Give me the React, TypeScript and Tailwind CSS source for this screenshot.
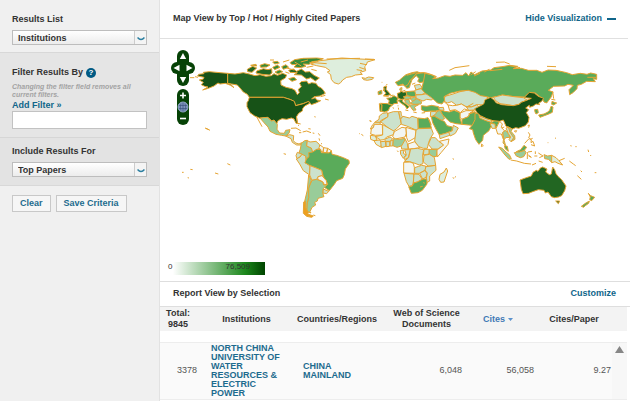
import { ReactNode, useState } from 'react';

type Shape = {
  fill: string;
  d: string;
};

type Region = {
  name: string;
  transform: string;
  shapes: Shape[];
  islands?: string;
};

const C = {
  none: '#f3f6f2',
  faint: '#deeedd',
  low: '#cce2cc',
  mid: '#99cc99',
  high: '#5aab5a',
  higher: '#378a37',
  top: '#226622',
  max: '#175217',
};

// Every region is traced in its own local frame and moved into place
const regions: Region[] = [
  {
    name: 'North America',
    transform: 'translate(0 3)',
    shapes: [
      { fill: C.max, d: 'M116 103L132 101L130 97L148 95L180 98L203 100V130L212 133L222 143L212 136L196 130L180 132L174 129L162 138L145 145L128 150L144 141L134 139L124 134L130 127L118 120L130 117L132 112L113 108Z' },
      { fill: C.top, d: 'M203 100L225 102L250 98L268 102L285 107L300 104L318 109L334 107L342 101L352 106L368 100L380 105L376 114L362 122L363 135L378 142L396 146L405 151L412 164L418 158L415 148L424 140L419 130L424 125L440 123L446 132L455 128L468 130L474 139L484 144L491 152L496 160L480 168L462 170L455 177L466 173L470 180L482 182L468 189L454 194L447 185L428 191L407 197L402 185L392 179L370 172H268L262 163L250 156L240 144L232 135L215 132L203 130Z' },
      { fill: C.max, d: 'M268 172H370L392 179L403 184L407 197L430 191L446 184L449 190L434 198L428 206L427 213L416 220L409 231L413 250L408 250L402 237L394 234L380 238L366 236L354 242L350 252L342 240L335 243L324 232L300 235L284 228L270 218L261 200L261 188L265 182Z' },
      { fill: C.top, d: 'M262 88L278 79L290 84L276 97L263 95Z M290 93L310 86L324 89L335 86L336 99L328 105L306 103L288 99Z M386 91L400 87L410 94L424 87L436 96L449 95L462 106L478 114L466 123L452 113L440 117L424 105L402 104L412 98L390 97Z' },
      { fill: C.higher, d: 'M390 68L404 59L430 55L470 54L490 56L472 63L455 65L448 73L430 72L438 79L420 83L402 81L410 73L396 74Z M300 76L314 71L330 75L320 81L302 82Z M338 82L352 75L360 82L344 89Z M365 80L378 74L386 82L370 88Z M345 96L358 90L368 95L354 102Z M338 66L352 64L358 69L344 72Z M272 76L288 73L290 78Z M386 116L402 112L410 119L396 124Z' },
      { fill: C.faint, d: 'M452 72L470 65L480 62L498 60L510 58L545 54L580 56L620 58L645 59L622 66L619 75L614 80L617 92L600 97L607 103L586 105L574 110L560 112L548 120L542 128L535 132L522 128L514 118L512 104L502 96L510 92L496 82L470 77Z' },
    ],
    islands: 'M90 113H103M105 110L114 112M136 265L146 269M463 230L467 231M495 177L506 180M482 170L496 166M330 60H342M369 66L388 60M422 66L444 60M440 82L460 78M454 88L470 92M290 230L306 260M410 232L412 248M448 67L500 71M600 70L618 74M598 82L616 88M590 89L606 92M500 57L600 55M615 57L642 58M380 84L402 90M376 96L388 100M404 66L424 78',
  },
  {
    name: 'South America',
    transform: 'translate(0 243)',
    shapes: [
      { fill: C.mid, d: 'M300 -6L322 -8L334 3L342 1L352 13L351 28L359 39L373 40L377 31L390 29L387 40L377 48L365 46L348 43L330 34L324 21L312 8Z' },
      { fill: C.low, d: 'M377 48L389 44L401 47L400 62L407 69L417 72L425 68L422 75L410 75L397 67L393 56Z' },
      { fill: C.mid, d: 'M424 70L434 62L442 61L440 78L454 84L458 95L455 105L447 110L440 116L430 105L417 98L421 87Z' },
      { fill: C.low, d: 'M442 62L450 66L468 64L478 73L480 84L470 89L458 96L454 84L440 78Z' },
      { fill: C.none, d: 'M480 75L491 83L489 97L480 91L477 83Z M491 83L503 85L500 98L489 97Z M503 85L514 92L508 99L500 98Z' },
      { fill: C.low, d: 'M412 97L426 103L420 111L411 116L408 107Z' },
      { fill: C.low, d: 'M426 103L437 108L438 121L435 128L450 137L449 152L449 165L430 152L419 132L409 117L420 111Z' },
      { fill: C.high, d: 'M447 110L446 98L458 96L470 88L482 88L484 98L508 99L514 92L516 103L530 106L550 113L567 121L568 130L556 147L553 164L548 175L530 182L523 193L508 212L493 202L503 193L498 182L490 170L485 151L466 143L450 137L435 128L440 116Z' },
      { fill: C.low, d: 'M450 137L466 143L485 151L488 167L474 170L470 179L456 181L449 165Z' },
      { fill: C.none, d: 'M474 170L486 167L499 182L501 192L494 195L488 185L473 178Z' },
      { fill: C.mid, d: 'M456 181L470 178L488 186L491 195L502 193L490 206L489 222L492 230L474 235L472 243L464 247L467 255L456 262L450 275L453 279L440 274L441 252L446 232L445 205Z' },
      { fill: C.low, d: 'M490 207L506 214L500 221L489 219Z' },
      { fill: C.mid, d: 'M446 165L454 181L446 205L446 232L441 252L440 276L434 270L434 244L442 210Z' },
      { fill: '#eda01f', d: 'M431 246L437 244L436 262L445 277L443 282L460 288L455 292L440 289L430 280Z' },
    ],
    islands: 'M136 24L143 27L150 31M202 131L211 135M91 148L98 149M66 157H71M83 173L87 174M165 159L175 162M371 101L378 103M393 25L408 24L422 32M428 36L440 33L453 38M414 15L417 17M410 9L422 12M475 40L480 47M477 55L479 62M483 70L486 72M417 38H424M458 39L463 40M445 26L452 27M598 41H600M460 285L466 287',
  },
  {
    name: 'Europe',
    transform: 'translate(510 18)',
    shapes: [
      { fill: C.high, d: 'M196 112L208 106L218 97L228 89L246 83L262 80L270 84L258 87L250 97L240 107L238 119L231 127L224 124L219 117L204 122Z' },
      { fill: C.high, d: 'M270 84L281 83L289 88L288 100L290 108L270 113L263 109L267 101L259 92L246 104L241 118L238 128L230 130L226 123L234 119L240 107L250 97L258 87Z' },
      { fill: C.low, d: 'M96 98L106 100L116 96L131 98L127 103L112 106L101 104Z' },
      { fill: C.top, d: 'M161 126L170 123L168 133L176 142L182 149L170 152L161 151L168 145L163 139Z' },
      { fill: C.high, d: 'M144 140L155 136L156 146L145 149Z' },
      { fill: C.higher, d: 'M170 160L183 158L192 152L204 159L201 167L203 175L191 176L188 180L175 176L178 167Z' },
      { fill: C.higher, d: 'M148 176L156 178L155 199L150 199Z' },
      { fill: C.higher, d: 'M152 175L172 176L187 181L179 187L175 197L163 201L155 199L156 179Z' },
      { fill: C.top, d: 'M202 145L210 143L212 138L220 142L228 140L231 152L221 155L226 162L213 163L204 159Z' },
      { fill: C.mid, d: 'M209 135L211 129L216 128L215 136Z' },
      { fill: C.high, d: 'M228 140L252 138L258 143L256 154L246 155L231 152Z' },
      { fill: C.higher, d: 'M203 166L218 163L218 170L229 178L238 185L231 192L226 183L214 175Z' },
      { fill: C.mid, d: 'M221 155L232 153L244 156L240 162L226 163Z M224 165L236 163L241 175L236 180L226 172Z M240 161L256 155L260 165L249 170Z' },
      { fill: C.mid, d: 'M249 168L260 161L275 170L273 177L252 178L241 174Z' },
      { fill: C.mid, d: 'M238 180L252 179L266 179L253 186L258 195L249 196Z' },
      { fill: C.low, d: 'M253 121L270 118L277 129L258 135Z' },
      { fill: C.low, d: 'M254 136L276 130L285 144L275 149L257 149Z' },
      { fill: C.low, d: 'M257 150L276 149L291 146L312 157L305 165L290 163L279 168L259 160Z' },
      { fill: C.high, d: 'M274 182L290 184L305 181L326 185L330 195L317 198L303 198L285 200L274 194Z' },
    ],
    islands: 'M155 112L157 112M168 121L172 117M246 118L256 114M205 188L206 194M204 181V184M226 195L235 197M250 201L260 203M275 204L285 203M230 91L255 84L286 83L305 89L320 95M204 122L222 120M163 130L160 138M120 228L124 229M188 188L192 190M216 139L226 136M180 153L190 150M160 153L176 154',
  },
  {
    name: 'Africa and Middle East',
    transform: 'translate(600 138)',
    shapes: [
      { fill: C.low, d: 'M251 48L255 34L276 28L300 20L325 15L348 21L362 30L382 35L383 46L372 60L350 59L334 66L318 65L304 57L290 61L275 50L262 54Z' },
      { fill: C.none, d: 'M264 60L278 62L290 61L304 57L318 65L334 66L326 76L313 72L301 83L286 74L269 77Z' },
      { fill: C.low, d: 'M320 66L334 66L350 60L358 67L342 75L326 76Z' },
      { fill: C.none, d: 'M300 84L318 77L334 77L343 76L330 84L325 95L306 103L299 96Z' },
      { fill: C.high, d: 'M241 75L254 79L268 81L282 76L300 83L300 100L306 118L288 116L270 111L256 98L247 89Z' },
      { fill: C.mid, d: 'M238 76L247 88L254 101L244 106L221 92L229 82Z' },
      { fill: C.low, d: 'M212 80L229 79L228 86L219 93L211 95Z M235 68L250 67L252 76L240 75Z' },
      { fill: C.high, d: 'M214 96L222 93L244 106L253 109L261 122L277 126L276 138L257 145L238 150L228 133L218 113Z' },
      { fill: C.low, d: 'M238 150L257 145L267 141L272 150L240 161Z' },
      { fill: C.low, d: 'M280 121L295 129L286 145L271 153L266 142L277 137Z' },
      { fill: C.high, d: 'M306 103L325 95L331 84L345 80L353 91L345 107L338 121L325 120L306 118Z' },
      { fill: C.low, d: 'M68 85L82 83L84 95L62 107L61 112L44 112L57 103L58 93Z' },
      { fill: C.faint, d: 'M45 112L61 112L60 118L43 118L40 128L31 132L38 119Z' },
      { fill: C.none, d: 'M43 118L60 118L67 119L68 150L46 151L32 147L34 132L40 128Z' },
      { fill: C.low, d: 'M84 85L100 80L116 80L119 97L124 116L110 131L99 139L84 128L62 110L84 95Z' },
      { fill: C.low, d: 'M116 80L123 80L124 92L129 95L121 101Z' },
      { fill: C.low, d: 'M129 94L148 99L156 94L173 99L175 137L168 135L140 123L124 118L122 102Z' },
      { fill: C.high, d: 'M174 99L193 101L204 98L209 107L214 129L175 130Z' },
      { fill: C.faint, d: 'M68 119L84 128L103 139L100 149L80 156L72 164L62 165L46 155L68 150Z' },
      { fill: C.none, d: 'M103 140L126 127L138 129L139 145L135 156L106 162L98 155L100 149Z' },
      { fill: C.none, d: 'M138 127L168 136L166 158L145 170L140 158Z' },
      { fill: C.low, d: 'M174 131L214 130L220 146L211 160L206 172L202 190L190 190L174 184L164 168L168 136Z' },
      { fill: C.low, d: 'M214 158L226 158L236 169L252 180L234 192L216 192L205 178Z' },
      { fill: C.none, d: 'M238 169L267 162L264 178L244 202L232 216L230 196L251 180Z' },
      { fill: C.mid, d: 'M207 193L231 194L229 215L217 214L207 205Z' },
      { fill: C.low, d: 'M192 193H207V207L190 210Z' },
      { fill: C.mid, d: 'M100 161L118 163L135 160L136 170L126 182L111 187L98 182Z' },
      { fill: C.faint, d: 'M31 151L46 153L51 165L42 167L32 163Z M42 167L60 165L65 176L62 186L48 178Z' },
      { fill: C.low, d: 'M62 170L76 169L78 184L64 188Z M78 170H90L89 184L78 185Z M74 163L90 156L98 161L90 169H76Z M90 169L99 165L98 183H90Z' },
      { fill: C.low, d: 'M136 163L142 175L144 192L125 192L124 184Z' },
      { fill: C.none, d: 'M144 177L164 170L179 188L160 191L146 192Z' },
      { fill: C.low, d: 'M121 196H132L130 205L138 210L130 220L122 208Z M134 194L151 194L145 218L134 224L132 218L139 210Z' },
      { fill: C.low, d: 'M152 192L172 190L191 194L188 210L189 236L178 240L162 234L149 230L133 229L146 218Z' },
      { fill: C.none, d: 'M131 232L150 231L160 235L163 247V265L131 264Z' },
      { fill: C.low, d: 'M132 265L162 267L160 292L157 302L147 304L139 290Z' },
      { fill: C.low, d: 'M162 267L177 268L187 283L172 291L160 294Z' },
      { fill: C.low, d: 'M164 248L176 244L185 241L197 243L196 255L178 265H164Z' },
      { fill: C.low, d: 'M179 265L194 257L201 265L198 277L188 282Z' },
      { fill: C.low, d: 'M198 245L227 241L228 256L209 273L209 288L200 293L199 279L202 264L195 255Z' },
      { fill: C.low, d: 'M192 211L208 208L223 217L227 241L204 243L190 231Z' },
      { fill: C.high, d: 'M146 305L157 303L161 294L172 291L189 282L200 282L201 297L187 316L174 323L154 325Z' },
      { fill: C.faint, d: 'M240 268L252 261L259 249L263 258L252 291L242 292L237 283Z' },
    ],
    islands: 'M4 148L10 152M28 107L34 109M278 221L282 223M278 278L282 280M284 278L288 274M112 197L115 201M180 306L188 304M191 291L193 296M250 48L264 60M355 92L347 106M205 102L214 119',
  },
  {
    name: 'Asia and Oceania',
    transform: 'translate(930 33)',
    shapes: [
      { fill: C.high, d: 'M-135 70L-117 74L-102 81L-112 86L-95 84L-76 77L-60 79L-45 75L-22 76L-12 68L-4 78L3 66L14 74L36 63L62 60L72 53L96 50L120 46L143 49L130 56L154 55L175 61L200 61L216 67L234 60L258 61L290 68L307 74L331 70L351 73L362 69L380 73V88L370 86L376 95L350 94L334 103L322 106L321 116L309 128L299 134L297 119L310 106L294 103L284 108L251 109L235 121L249 126L243 142L230 159L222 156L217 146L196 129L178 128L164 141L132 140L97 135L84 139L61 143L45 139L32 137L15 127L-5 121L-30 123L-60 130L-78 140L-76 151L-84 162L-98 159L-107 150L-118 141L-134 130L-145 118L-140 96Z' },
      { fill: C.high, d: 'M15 190L25 190L29 202L48 211L66 217L75 211L89 213L82 228L76 235L69 225L62 232L57 242L40 256L38 271L27 283L17 269L10 249L8 239L-2 236L7 225L15 209Z' },
      { fill: C.low, d: 'M30 199L49 206L66 211L64 217L48 212L29 204Z M60 220L75 222L76 235L66 235Z' },
      { fill: C.low, d: 'M70 142L82 139L97 135L132 140L160 143L171 150L154 157L146 163L130 167L106 163L90 161L77 152Z' },
      { fill: C.max, d: 'M14 176L28 169L41 162L45 149L62 142L73 151L78 158L95 164L130 167L147 163L154 157L172 150L184 145L162 143L178 127L193 129L205 139L221 145L214 155L206 159L209 164L198 162L190 168L179 172L178 166L167 174L176 179L169 188L177 202L175 216L166 227L146 235L137 233L127 237L115 231L108 229L100 210L89 214L69 212L50 206L31 197L20 187Z' },
      { fill: C.none, d: 'M89 214L97 222L94 232L105 244L98 248L100 267L94 252L83 252L78 236L83 225Z' },
      { fill: C.mid, d: 'M98 247L107 241L116 252L120 262L107 263L102 270L107 287L99 279L101 264Z' },
      { fill: C.low, d: 'M108 234L115 232L123 239L120 246L131 257L132 268L123 275L117 269L122 261L115 251Z' },
      { fill: C.mid, d: 'M115 231L126 237L123 244L134 257L135 268L123 275L131 263L120 247Z' },
      { fill: C.high, d: 'M103 287L112 289L115 304L106 297Z' },
      { fill: C.mid, d: 'M86 291L97 295L108 306L118 314L124 326L117 328L105 315Z' },
      { fill: C.mid, d: 'M133 308L148 305L164 301L168 308L161 320L151 323L139 318Z' },
      { fill: C.high, d: 'M139 305L152 299L162 286L170 292L163 301L148 306Z' },
      { fill: C.mid, d: 'M222 314L233 318L245 316V337L235 328L224 326Z' },
      { fill: C.faint, d: 'M245 316L258 323L267 332L278 345L264 340L255 335L245 338Z' },
      { fill: C.high, d: 'M194 179L203 178L205 188L198 192L195 186Z' },
      { fill: C.high, d: 'M206 195L222 192L232 187L239 181L243 169L249 171L247 187L234 193L223 197L210 202Z M246 154L253 157L260 159L251 165L245 163Z' },
      { fill: C.top, d: 'M150 390L166 384L184 378L189 367L199 361L204 364L211 354L218 351L231 357L227 366L238 374L244 372L248 351L254 359L258 371L264 379L275 389L288 408L284 422L275 437L266 441L254 443L244 440L234 426L226 429L222 421L205 419L188 425L176 430L159 431L154 418Z' },
      { fill: C.top, d: 'M257 453L269 453L265 461Z' },
      { fill: C.high, d: 'M355 430L362 437L374 442L365 452L359 449L361 441Z M334 469L346 460L358 453L356 460L346 467L341 472Z' },
    ],
    islands: 'M78 37L103 36L119 42M-62 61L-45 53L-2 47M231 49L258 50M118 47L150 53M248 124L251 146M244 148L256 150M173 227L178 225L176 233M133 243L140 242L137 247ZM35 282L40 287L34 290ZM175 247L180 255L176 263L184 269L183 278L189 274L194 288L183 284M164 280L177 266M179 269L188 265M122 330L140 333L163 340L183 342M186 345L198 340M172 306V327M174 306L186 304M175 315L184 322L176 318M196 304V312M193 318H202M205 309L219 318L208 323M206 333L218 337M267 332L284 325M298 333L310 342L317 347M322 377L334 388M332 362L336 366M354 299L356 306M361 315L363 318M374 368H379M316 290H320M301 287L305 288M255 265L258 264M233 278H235M58 58L43 66M2 75L17 65M12 78L30 70M60 62L97 58M352 82H378M95 234L103 231M14 187L-5 192M-12 172L10 160',
  },
];

function WorldMap() {
  return (
    <svg viewBox="0 0 1410 660" className="block w-full" role="img" aria-label="World map of cited papers">
      <g stroke="#e5a432" strokeWidth="3" strokeLinejoin="round">
        {regions.map((region) => (
          <g key={region.name} transform={region.transform}>
            {region.shapes.map((shape) => (
              <path key={shape.d} d={shape.d} fill={shape.fill} />
            ))}
            {region.islands && <path d={region.islands} fill="none" />}
          </g>
        ))}
      </g>
    </svg>
  );
}

type MapButtonProps = {
  label: string;
  className: string;
  children: ReactNode;
};

function MapButton({ label, className, children }: MapButtonProps) {
  return (
    <button type="button" aria-label={label} className={`flex h-3 w-3 items-center justify-center bg-[#064206] ${className}`}>
      <svg viewBox="0 0 12 12" className="h-3 w-3" fill="none" stroke="#fff" strokeWidth="1.6">
        {children}
      </svg>
    </button>
  );
}

function MapControls() {
  return (
    <div className="absolute top-[11px] left-[11px] flex w-6 flex-col items-center">
      <MapButton label="Pan up" className="rounded-t-full">
        <path d="M6 3L9.200 9H2.800Z" fill="#fff" stroke="none" />
      </MapButton>
      <div className="flex">
        <MapButton label="Pan left" className="rounded-l-full">
          <path d="M2.500 6L8.500 2.800V9.200Z" fill="#fff" stroke="none" />
        </MapButton>
        <MapButton label="Pan right" className="rounded-r-full">
          <path d="M9.500 6L3.500 2.800V9.200Z" fill="#fff" stroke="none" />
        </MapButton>
      </div>
      <MapButton label="Pan down" className="rounded-b-full">
        <path d="M6 9L9.200 3H2.800Z" fill="#fff" stroke="none" />
      </MapButton>
      <div className="mt-[3px] flex flex-col">
        <MapButton label="Zoom in" className="rounded-t-full">
          <path d="M6 3.500V9.500M3 6.500H9" />
        </MapButton>
        <MapButton label="Zoom to world" className="">
          <circle cx="6" cy="6" r="5" fill="#7f95bd" stroke="#8fa6c6" strokeWidth="1" />
          <path d="M2 4.500H10M2 7.500H10M6 1.500V10.500M4 2.500Q2.500 6 4 9.500M8 2.500Q9.500 6 8 9.500" stroke="#3b5580" strokeWidth="0.7" />
        </MapButton>
        <MapButton label="Zoom out" className="rounded-b-full">
          <path d="M3 5.500H9" />
        </MapButton>
      </div>
    </div>
  );
}

type SelectFieldProps = {
  id: string;
  value: string;
  options: string[];
  onChange: (value: string) => void;
};

function SelectField({ id, value, options, onChange }: SelectFieldProps) {
  return (
    <div className="relative">
      <select
        id={id}
        value={value}
        onChange={(e) => onChange(e.target.value)}
        className="block h-[15px] w-full appearance-none border border-[#bdbdbd] bg-gradient-to-b from-white to-[#ececec] pt-px pr-4 pl-[5px] text-[9px] leading-3 font-bold text-[#333]"
      >
        {options.map((option) => (
          <option key={option}>{option}</option>
        ))}
      </select>
      <span className="pointer-events-none absolute inset-y-px right-px flex w-3 items-end justify-center border-l border-[#ccc] bg-[#f4f4f4] pb-[3px]">
        <svg viewBox="0 0 8 4" className="h-1 w-2" fill="none" stroke="#2c7fa0" strokeWidth="1.5">
          <path d="M0.500 0.500Q4 4.500 7.500 0.500" />
        </svg>
      </span>
    </div>
  );
}

export default function App() {
  const [resultsList, setResultsList] = useState('Institutions');
  const [includeFor, setIncludeFor] = useState('Top Papers');
  const [filter, setFilter] = useState('');

  return (
    <div className="flex min-h-screen bg-white font-['Liberation_Sans',Arial,sans-serif] text-[9px] leading-[11px] text-[#333]">
      <aside className="w-40 shrink-0 border-r border-[#e2e2e2] bg-[#f0f0f0]">
        <section className="border-b border-[#d8d8d8] px-3 pt-[14px] pb-[7px]">
          <label htmlFor="results-list" className="mb-[5px] block font-bold">
            Results List
          </label>
          <SelectField
            id="results-list"
            value={resultsList}
            options={['Institutions', 'Authors', 'Research Fields', 'Countries/Territories', 'Journals']}
            onChange={setResultsList}
          />
        </section>

        <section className="border-b border-[#d6d6d6] bg-[#e5e5e5] px-3 pt-[14px] pb-2">
          <div className="flex items-center gap-[3px]">
            <label htmlFor="filter" className="font-bold">
              Filter Results By
            </label>
            <button
              type="button"
              aria-label="Help"
              className="flex h-[10px] w-[10px] items-center justify-center rounded-full bg-[#005a84] text-[8px] leading-none font-bold text-white"
            >
              ?
            </button>
          </div>
          <p className="mt-[5px] text-[7px] leading-2 font-bold text-[#a3a3a3] italic">
            Changing the filter field removes all current filters.
          </p>
          <a href="#add-filter" className="mt-px block font-bold text-[#10658a]">
            Add Filter »
          </a>
          <input
            id="filter"
            type="text"
            value={filter}
            onChange={(e) => setFilter(e.target.value)}
            className="block h-[18px] w-full border border-[#c2c2c2] bg-white px-1"
          />
        </section>

        <section className="border-b border-[#d8d8d8] bg-[#e3e3e3] px-3 pt-2 pb-2">
          <label htmlFor="include-for" className="mb-[5px] block font-bold">
            Include Results For
          </label>
          <SelectField
            id="include-for"
            value={includeFor}
            options={['Top Papers', 'Highly Cited Papers', 'Hot Papers']}
            onChange={setIncludeFor}
          />
        </section>

        <div className="flex gap-[5px] px-3 pt-[9px]">
          <button type="button" className="h-[17px] border border-[#c8c8c8] bg-[#f6f6f6] px-[7px] font-bold text-[#1d6b8e]">
            Clear
          </button>
          <button type="button" className="h-[17px] border border-[#c8c8c8] bg-[#f6f6f6] px-[7px] font-bold text-[#1d6b8e]">
            Save Criteria
          </button>
        </div>
      </aside>

      <main className="min-w-0 flex-1">
        <div className="mr-[2px] flex items-center justify-between border-b border-[#e0e0e0] pt-[13px] pr-3 pb-[14px] pl-[13px]">
          <h1 className="font-bold">Map View by Top / Hot / Highly Cited Papers</h1>
          <button type="button" className="flex items-center gap-[5px] font-bold text-[#10658a]">
            Hide Visualization
            <span className="h-[2px] w-[9px] bg-[#10658a]" />
          </button>
        </div>

        <div className="relative">
          <WorldMap />
          <MapControls />
        </div>

        <div className="mt-[3px] mb-[6px] ml-2 h-[13px] w-[97px] bg-[linear-gradient(to_right,#fff,#fff_5%,#1a861a_80%,#004400)]">
          <div className="flex justify-between pr-[15px] text-[8px] leading-[9px]">
            <span>0</span>
            <span>76,509</span>
          </div>
        </div>

        <div className="flex items-center justify-between border-t border-b border-[#dedede] pt-[6px] pr-[14px] pb-[7px] pl-[13px]">
          <h2 className="font-bold">Report View by Selection</h2>
          <button type="button" className="font-bold text-[#10658a]">
            Customize
          </button>
        </div>

        <div className="pr-[3px]">
          <table className="w-full table-fixed border-collapse">
            <colgroup>
              <col className="w-11" />
              <col />
              <col className="w-24" />
              <col className="w-[83px]" />
              <col className="w-[68px]" />
              <col className="w-[76px]" />
              <col className="w-[15px]" />
            </colgroup>
            <thead>
              <tr className="h-6 bg-[#f3f3f3]">
                <th className="pr-2">
                  Total:
                  <br />
                  9845
                </th>
                <th>Institutions</th>
                <th>Countries/Regions</th>
                <th className="px-1">Web of Science Documents</th>
                <th className="pr-2 text-[#3f79b5]">
                  <button type="button" className="inline-flex items-center gap-[3px] font-bold">
                    Cites
                    <svg viewBox="0 0 5 3" className="h-[3px] w-[5px]" fill="#5a91cc">
                      <path d="M0 0H5L2.500 3Z" />
                    </svg>
                  </button>
                </th>
                <th>Cites/Paper</th>
                <th />
              </tr>
            </thead>
            <tbody>
              <tr className="h-[11px]">
                <td colSpan={7} />
              </tr>
              <tr className="h-[57px] border-t border-b border-[#ededed] bg-[#fafafa]">
                <td className="pr-[7px] text-right text-[#555]">3378</td>
                <td className="pl-[7px]">
                  <a href="#institution" className="block leading-[9px] font-bold text-[#1d6b8e]">
                    NORTH CHINA UNIVERSITY OF WATER RESOURCES & ELECTRIC POWER
                  </a>
                </td>
                <td className="pl-[14px]">
                  <a href="#country" className="block leading-[9px] font-bold text-[#1d6b8e]">
                    CHINA
                    <br />
                    MAINLAND
                  </a>
                </td>
                <td className="pr-[6px] text-right text-[#555]">6,048</td>
                <td className="pr-[2px] text-right text-[#555]">56,058</td>
                <td className="pr-px text-right text-[#555]">9.27</td>
                <td className="bg-[#f7f7f7] pt-[3px] align-top">
                  <button type="button" aria-label="Scroll up" className="flex w-full justify-center">
                    <svg viewBox="0 0 9 7" className="h-[7px] w-[9px]" fill="#868686">
                      <path d="M4.500 0L9 7H0Z" />
                    </svg>
                  </button>
                </td>
              </tr>
            </tbody>
          </table>
        </div>
      </main>
    </div>
  );
}
